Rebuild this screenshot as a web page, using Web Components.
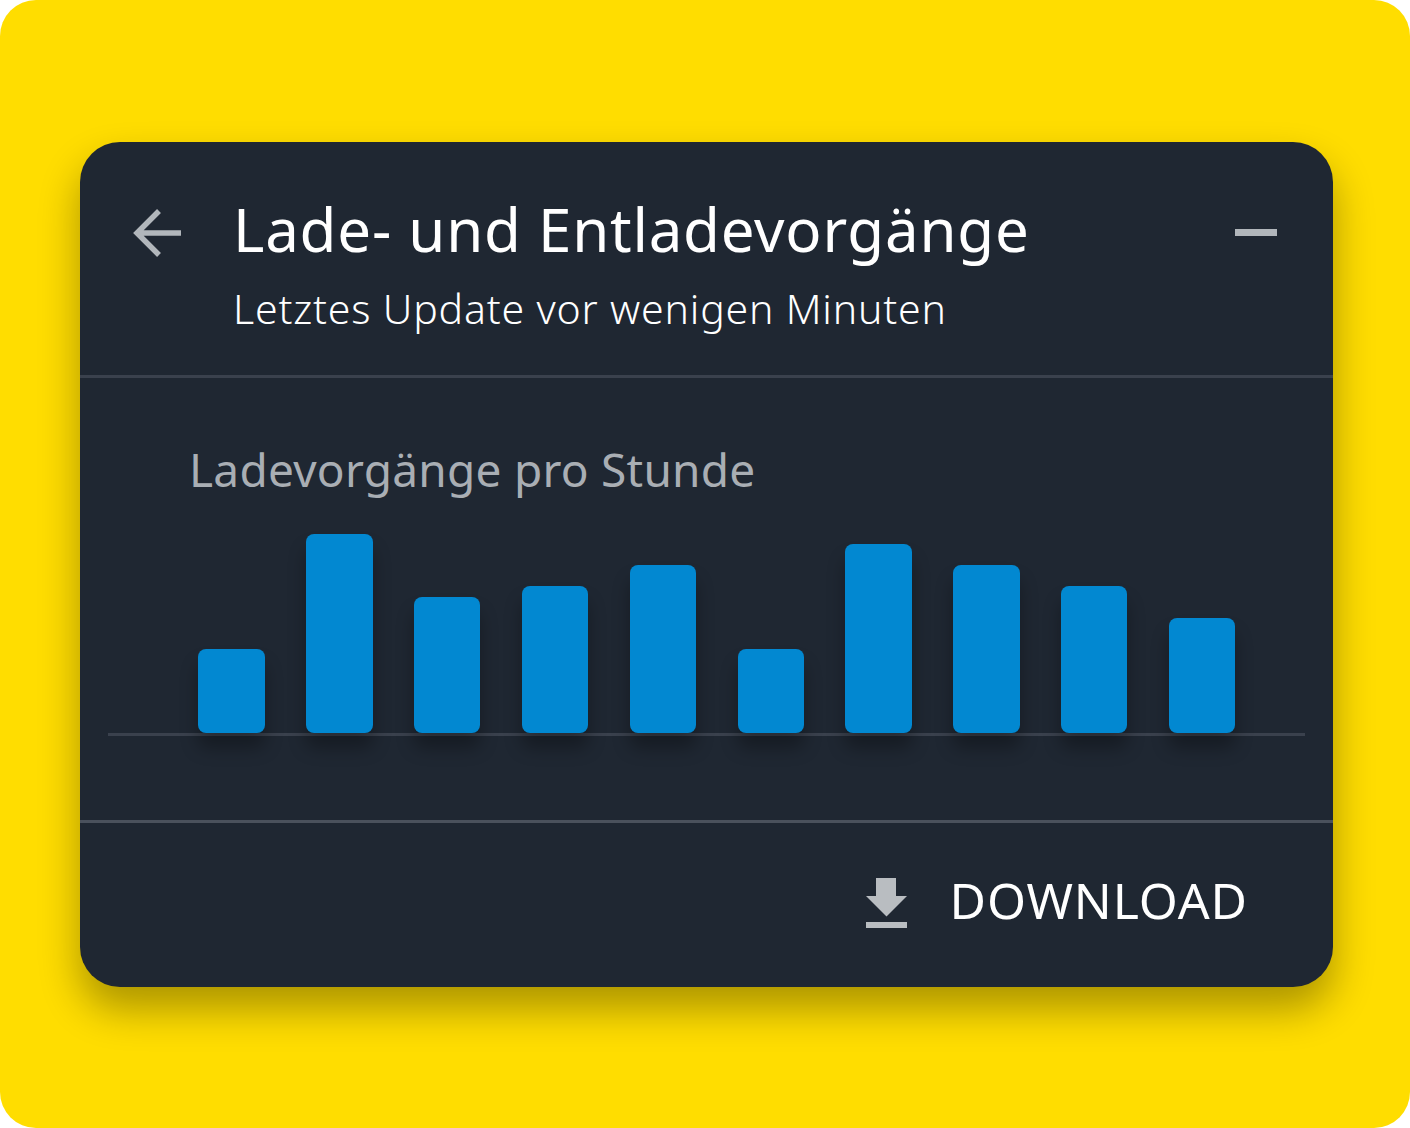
<!DOCTYPE html>
<html lang="de">
<head>
<meta charset="utf-8">
<title>Lade- und Entladevorgänge</title>
<style>
  html, body { margin: 0; padding: 0; background: #fff; }
  body { font-family: "Noto Sans", "Open Sans", sans-serif; }
</style>
</head>
<body>
<yellow-stage>
  <charge-card>
    <card-header slot="header" title="Lade- und Entladevorgänge" subtitle="Letztes Update vor wenigen Minuten"></card-header>
    <bar-chart slot="chart" label="Ladevorgänge pro Stunde" values="84,199,136,147,168,84,189,168,147,115"></bar-chart>
    <card-footer slot="footer">DOWNLOAD</card-footer>
  </charge-card>
</yellow-stage>

<script>
class YellowStage extends HTMLElement {
  connectedCallback() {
    this.attachShadow({ mode: 'open' });
    this.shadowRoot.innerHTML = `
      <style>
        :host {
          display: block;
          width: 1410px;
          height: 1128px;
          box-sizing: border-box;
          padding: 142px 77px 141px 80px;
          background: #ffdd00;
          border-radius: 36px;
          overflow: hidden;
        }
      </style>
      <slot></slot>
    `;
  }
}

class ChargeCard extends HTMLElement {
  connectedCallback() {
    this.attachShadow({ mode: 'open' });
    this.shadowRoot.innerHTML = `
      <style>
        :host {
          display: flex;
          flex-direction: column;
          height: 845px;
          background: #1f2732;
          border-radius: 40px;
          box-shadow: 0 22px 40px rgba(0, 0, 0, 0.33);
          color: #fff;
        }
      </style>
      <slot name="header"></slot>
      <slot name="chart"></slot>
      <slot name="footer"></slot>
    `;
  }
}

class CardHeader extends HTMLElement {
  connectedCallback() {
    this.attachShadow({ mode: 'open' });
    this.shadowRoot.innerHTML = `
      <style>
        :host {
          display: grid;
          grid-template-columns: 153px 1fr 42px;
          box-sizing: border-box;
          height: 236px;
          padding: 48px 56px 0 0;
          border-bottom: 3px solid #3a414d;
        }
        .back { padding: 18px 0 0 52px; }
        svg { display: block; }
        h1 {
          margin: 0;
          font-size: 60px;
          line-height: 78px;
          font-weight: 400;
          letter-spacing: 0.76px;
          white-space: nowrap;
        }
        p {
          margin: 0;
          padding-top: 17px;
          font-size: 41px;
          line-height: 46px;
          font-weight: 300;
          letter-spacing: 0.83px;
          white-space: nowrap;
        }
        .min { padding-top: 39px; }
      </style>
      <div class="back">
        <svg width="50" height="50" viewBox="0 0 50 50" fill="none" stroke="#b1b6bb" stroke-width="5.500">
          <path d="M49 25H5M27 3L5 25l22 22"/>
        </svg>
      </div>
      <div>
        <h1>${this.getAttribute('title')}</h1>
        <p>${this.getAttribute('subtitle')}</p>
      </div>
      <div class="min">
        <svg width="42" height="8" viewBox="0 0 42 8"><rect width="42" height="7" fill="#b1b6bb"/></svg>
      </div>
    `;
  }
}

class ChartBar extends HTMLElement {
  connectedCallback() {
    this.attachShadow({ mode: 'open' });
    this.shadowRoot.innerHTML = `
      <style>
        :host {
          display: block;
          width: 66.400px;
          height: var(--h);
          background: #0288d1;
          border-radius: 8px;
          box-shadow: 0 15px 18px rgba(0, 0, 0, 0.3);
        }
      </style>
    `;
  }
}

class BarChart extends HTMLElement {
  connectedCallback() {
    this.attachShadow({ mode: 'open' });
    const bars = this.getAttribute('values').split(',')
      .map(v => `<chart-bar style="--h:${v}px"></chart-bar>`).join('');
    this.shadowRoot.innerHTML = `
      <style>
        :host {
          display: block;
          box-sizing: border-box;
          height: 445px;
          padding: 63px 28px 0;
          border-bottom: 3px solid #4a515c;
        }
        h2 {
          margin: 0;
          padding-left: 81px;
          font-size: 46px;
          line-height: 56px;
          font-weight: 400;
          letter-spacing: 0.25px;
          color: #a9aeb4;
          white-space: nowrap;
        }
        .plot {
          display: flex;
          align-items: flex-end;
          gap: 41.450px;
          height: 199px;
          margin-top: 37px;
          padding-left: 90.400px;
          border-bottom: 3px solid #3a414d;
        }
      </style>
      <h2>${this.getAttribute('label')}</h2>
      <div class="plot">${bars}</div>
    `;
  }
}

class CardFooter extends HTMLElement {
  connectedCallback() {
    this.attachShadow({ mode: 'open' });
    this.shadowRoot.innerHTML = `
      <style>
        :host {
          display: flex;
          justify-content: flex-end;
          align-items: center;
          gap: 43px;
          box-sizing: border-box;
          height: 164px;
          padding: 0 85px 4px 0;
        }
        svg { display: block; }
        span {
          margin-bottom: 6px;
          font-size: 50px;
          line-height: 56px;
          font-weight: 400;
          letter-spacing: 0.9px;
          white-space: nowrap;
        }
      </style>
      <svg width="41" height="50" viewBox="0 0 41 50" fill="#b9bdc1">
        <path d="M10 0H30V18H41L20.500 38.500L0 18H10Z"/>
        <rect y="44" width="41" height="6"/>
      </svg>
      <span><slot></slot></span>
    `;
  }
}

customElements.define('yellow-stage', YellowStage);
customElements.define('charge-card', ChargeCard);
customElements.define('card-header', CardHeader);
customElements.define('chart-bar', ChartBar);
customElements.define('bar-chart', BarChart);
customElements.define('card-footer', CardFooter);
</script>
</body>
</html>
